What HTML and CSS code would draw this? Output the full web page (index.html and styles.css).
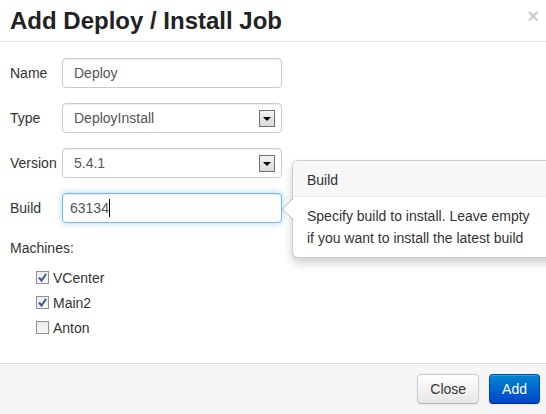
FILE: index.html
```html
<!DOCTYPE html>
<html>
<head>
<meta charset="utf-8">
<link rel="stylesheet" href="styles.css">
</head>
<body>
<div class="modal">
  <div class="modal-header">
    <h3 class="title">Add Deploy / Install Job</h3>
    <span class="close">×</span>
  </div>
  <div class="modal-body">
    <div class="row">
      <label class="lbl">Name</label>
      <div class="input">Deploy</div>
    </div>
    <div class="row">
      <label class="lbl">Type</label>
      <div class="input select">DeployInstall<span class="arrow-box"><span class="tri"></span></span></div>
    </div>
    <div class="row">
      <label class="lbl">Version</label>
      <div class="input select">5.4.1<span class="arrow-box"><span class="tri"></span></span></div>
    </div>
    <div class="row">
      <label class="lbl">Build</label>
      <div class="input focus">63134<span class="caret"></span></div>
    </div>
    <div class="machines">Machines:</div>
    <ul class="checks">
      <li><span class="cb"><svg width="11" height="11" viewBox="0 0 11 11"><path d="M2 5.5 L4.5 8.5 L9 2" fill="none" stroke="#3b5a9a" stroke-width="2"/></svg></span>VCenter</li>
      <li><span class="cb"><svg width="11" height="11" viewBox="0 0 11 11"><path d="M2 5.5 L4.5 8.5 L9 2" fill="none" stroke="#3b5a9a" stroke-width="2"/></svg></span>Main2</li>
      <li><span class="cb"></span>Anton</li>
    </ul>
  </div>
  <div class="modal-footer">
    <span class="btn">Close</span>
    <span class="btn btn-primary">Add</span>
  </div>
  <div class="popover">
    <div class="pop-arrow"></div>
    <div class="pop-title">Build</div>
    <div class="pop-content">Specify build to install. Leave empty<br>if you want to install the latest build</div>
  </div>
</div>
</body>
</html>
```
FILE: styles.css
```css
html, body {
  margin: 0;
  padding: 0;
  background: #fff;
}
body {
  font-family: "Liberation Sans", Arial, sans-serif;
  font-size: 14px;
  line-height: 20px;
  color: #333;
  width: 546px;
  height: 414px;
  overflow: hidden;
}
.modal {
  position: relative;
  width: 546px;
  height: 414px;
  display: flex;
  flex-direction: column;
}
.modal-header {
  height: 42px;
  border-bottom: 1px solid #e5e5e5;
  padding: 0 10px;
  display: flex;
  align-items: center;
  justify-content: space-between;
  box-sizing: border-box;
}
.title {
  margin: 0;
  font-size: 24px;
  font-weight: bold;
  line-height: 30px;
  color: #222;
  padding-top: 0;
}
.close {
  font-size: 20px;
  font-weight: bold;
  color: #000;
  opacity: 0.2;
  margin-top: -9px;
  margin-right: -3px;
}
.modal-body {
  padding: 16px 10px 0 10px;
  flex: 1;
}
.row {
  display: flex;
  align-items: center;
  height: 30px;
  margin-bottom: 15px;
}
.lbl {
  width: 52px;
  color: #333;
}
.input {
  position: relative;
  box-sizing: border-box;
  width: 220px;
  height: 30px;
  border: 1px solid #ccc;
  border-radius: 4px;
  padding: 4px 11px;
  color: #555;
  box-shadow: inset 0 1px 1px rgba(0,0,0,0.075);
}
.select {
  padding-left: 11px;
}
.arrow-box {
  position: absolute;
  right: 6px;
  top: 6px;
  width: 14px;
  height: 15px;
  border: 1px solid #6f6f6f;
  background: linear-gradient(#f4f4f4, #d9d9d9);
  display: flex;
  align-items: center;
  justify-content: center;
}
.tri {
  width: 0;
  height: 0;
  border-left: 4px solid transparent;
  border-right: 4px solid transparent;
  border-top: 4px solid #000;
}
.focus {
  border-color: rgba(82,168,236,0.8);
  box-shadow: inset 0 1px 1px rgba(0,0,0,0.075), 0 0 6px rgba(82,168,236,0.5);
  padding-left: 7px;
}
.caret {
  display: inline-block;
  width: 1px;
  height: 18px;
  background: #000;
  vertical-align: -4px;
}
.machines {
  margin-top: 0;
  height: 20px;
  color: #333;
  margin-bottom: 7px;
}
.checks {
  list-style: none;
  margin: 0;
  padding: 0 0 0 26px;
}
.checks li {
  display: flex;
  align-items: center;
  height: 25px;
  color: #333;
}
.cb {
  box-sizing: border-box;
  width: 13px;
  height: 13px;
  border: 1px solid #8f8f9d;
  background: linear-gradient(#ebebeb, #f7f7f7);
  margin-right: 4px;
  display: flex;
  align-items: center;
  justify-content: center;
}
.cb svg {
  display: block;
}
.modal-footer {
  height: 50px;
  border-top: 1px solid #ddd;
  background: #f5f5f5;
  display: flex;
  justify-content: flex-end;
  align-items: center;
  gap: 10px;
  padding: 0 6px 0 0;
  box-shadow: inset 0 1px 0 #fff;
}
.btn {
  box-sizing: border-box;
  height: 30px;
  padding: 4px 12px;
  line-height: 20px;
  border: 1px solid #ccc;
  border-bottom-color: #b3b3b3;
  border-radius: 4px;
  background: linear-gradient(#fff, #e6e6e6);
  color: #333;
  box-shadow: inset 0 1px 0 rgba(255,255,255,0.2), 0 1px 2px rgba(0,0,0,0.05);
}
.btn-primary {
  background: linear-gradient(#0088cc, #0044cc);
  border-color: #0044cc #0044cc #002a80;
  color: #fff;
  padding: 4px 12px;
}
.popover {
  position: absolute;
  left: 292px;
  top: 160px;
  width: 276px;
  background: #fff;
  border: 1px solid rgba(0,0,0,0.2);
  border-radius: 6px;
  box-shadow: 0 5px 10px rgba(0,0,0,0.2);
}
.pop-title {
  background: #f7f7f7;
  border-bottom: 1px solid #ebebeb;
  border-radius: 5px 5px 0 0;
  padding: 9px 14px 6px;
  line-height: 20px;
  color: #333;
}
.pop-content {
  padding: 8px 14px 8px;
  line-height: 22px;
  color: #333;
}
.pop-arrow {
  position: absolute;
  left: -11px;
  top: 37px;
  width: 0;
  height: 0;
  border-top: 11px solid transparent;
  border-bottom: 11px solid transparent;
  border-right: 11px solid rgba(0,0,0,0.25);
}
.pop-arrow::after {
  content: "";
  position: absolute;
  left: 1px;
  top: -10px;
  border-top: 10px solid transparent;
  border-bottom: 10px solid transparent;
  border-right: 10px solid #fff;
}
```
